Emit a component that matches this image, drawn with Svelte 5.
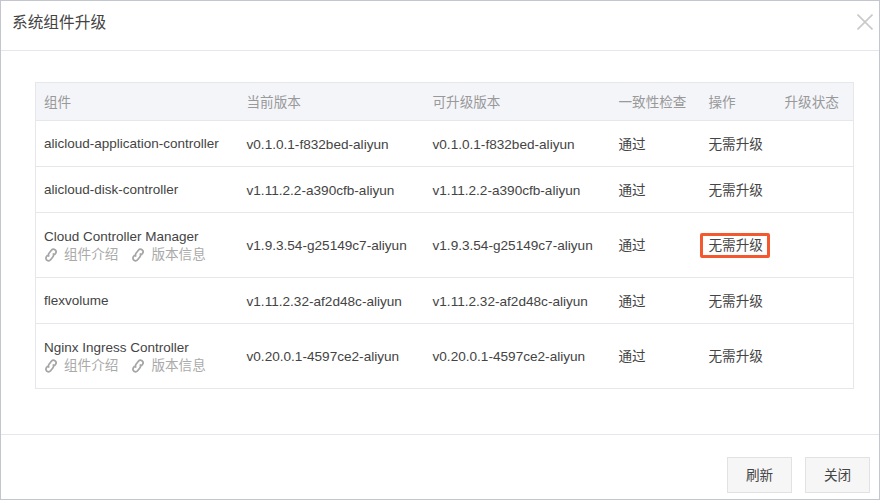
<script>
  const rows = [
    { name: 'alicloud-application-controller', ver: 'v0.1.0.1-f832bed-aliyun' },
    { name: 'alicloud-disk-controller', ver: 'v1.11.2.2-a390cfb-aliyun' },
    { name: 'Cloud Controller Manager', ver: 'v1.9.3.54-g25149c7-aliyun', links: true, mark: true },
    { name: 'flexvolume', ver: 'v1.11.2.32-af2d48c-aliyun' },
    { name: 'Nginx Ingress Controller', ver: 'v0.20.0.1-4597ce2-aliyun', links: true }
  ];
</script>

{#snippet linkIcon()}
  <svg class="icon" viewBox="0 0 14 14" width="14" height="14" aria-hidden="true">
    <path d="M5 8.6C4.2 7.4 4.4 6 5.2 5L7.4 2.2C8.3 1.1 9.9.9 11 1.7c1.2.9 1.4 2.5.5 3.7L10.2 7" />
    <path d="M9 5.4c.8 1.2.6 2.6-.2 3.6L6.6 11.8c-.9 1.1-2.5 1.3-3.6.5-1.2-.9-1.4-2.5-.5-3.7L3.8 7" />
  </svg>
{/snippet}

<div class="dialog">
  <header class="head">
    <h1>系统组件升级</h1>
    <svg class="close" viewBox="0 0 16 16" width="16" height="16" aria-label="关闭">
      <path d="M.5.5l15 15M15.5.5l-15 15" />
    </svg>
  </header>
  <main class="body">
    <table>
      <colgroup>
        <col class="c1" /><col class="c2" /><col class="c3" /><col class="c4" /><col class="c5" /><col />
      </colgroup>
      <thead>
        <tr>
          <th>组件</th><th>当前版本</th><th>可升级版本</th><th>一致性检查</th><th>操作</th><th>升级状态</th>
        </tr>
      </thead>
      <tbody>
        {#each rows as r}
          <tr class:tall={r.links}>
            <td>
              <div class="name">{r.name}</div>
              {#if r.links}
                <div class="links">
                  <span class="link">{@render linkIcon()}组件介绍</span>
                  <span class="link">{@render linkIcon()}版本信息</span>
                </div>
              {/if}
            </td>
            <td>{r.ver}</td>
            <td>{r.ver}</td>
            <td>通过</td>
            <td><span class="action" class:mark={r.mark}>无需升级</span></td>
            <td></td>
          </tr>
        {/each}
      </tbody>
    </table>
  </main>
  <footer class="foot">
    <button>刷新</button>
    <button>关闭</button>
  </footer>
</div>

<style>
  :global(body) { margin: 0; background: #fff; }
  .dialog {
    box-sizing: border-box;
    width: 880px;
    height: 500px;
    border: 1px solid #c4c6cf;
    display: flex;
    flex-direction: column;
    font-family: "Liberation Sans", "Noto Sans CJK SC", sans-serif;
    font-size: 14px;
    color: #444;
    background: #fff;
  }
  .head {
    height: 49px;
    flex: none;
    border-bottom: 1px solid #e6e7eb;
    display: flex;
    align-items: center;
    justify-content: space-between;
    padding: 0 6px 0 11px;
  }
  .head h1 { margin: -6px 0 0; font-size: 15.7px; font-weight: 400; line-height: 24px; }
  .close { margin-top: -8px; fill: none; stroke: #c9c9c9; stroke-width: 1.6; }
  .body { flex: 1; padding: 31px 25px 0 34px; }
  table {
    width: 819px;
    border-collapse: collapse;
    table-layout: fixed;
    border: 1px solid #e6e7eb;
  }
  .c1 { width: 202px; }
  .c2, .c3 { width: 186px; }
  .c4 { width: 90px; }
  .c5 { width: 76px; }
  th {
    height: 38px;
    padding: 0 0 2px 9px;
    box-sizing: border-box;
    background: #f4f5f9;
    color: #999;
    font-weight: 400;
    font-size: 13.6px;
    text-align: left;
    border-bottom: 1px solid #e6e7eb;
  }
  td {
    height: 46px;
    padding: 2px 0 0 9px;
    box-sizing: border-box;
    border-bottom: 1px solid #e6e7eb;
    line-height: 18px;
    font-size: 13.6px;
  }
  th:first-child, td:first-child { padding-left: 8px; }
  .tall td { height: 65px; }
  .name { margin-top: -1px; font-size: 13.5px; }
  .links { display: flex; gap: 13px; color: #aaa; }
  .link { display: inline-flex; align-items: center; gap: 6px; }
  .icon { fill: none; stroke: #a5a5a5; stroke-width: 1.7; }
  .action { position: relative; display: inline-block; }
  .mark::after {
    content: "";
    position: absolute;
    left: -9px;
    right: -7px;
    top: -4px;
    bottom: -3px;
    border: 3px solid #f4582f;
    border-radius: 2px;
  }
  .foot {
    flex: none;
    height: 65px;
    border-top: 1px solid #e6e7eb;
    display: flex;
    justify-content: flex-end;
    align-items: flex-start;
    gap: 13px;
    padding: 22px 9px 0 0;
    box-sizing: border-box;
  }
  button {
    width: 65px;
    height: 36px;
    padding: 0 0 2px;
    border: 1px solid #e2e2e2;
    background: #f6f6f6;
    color: #444;
    font: inherit;
    font-size: 13.6px;
  }
</style>
